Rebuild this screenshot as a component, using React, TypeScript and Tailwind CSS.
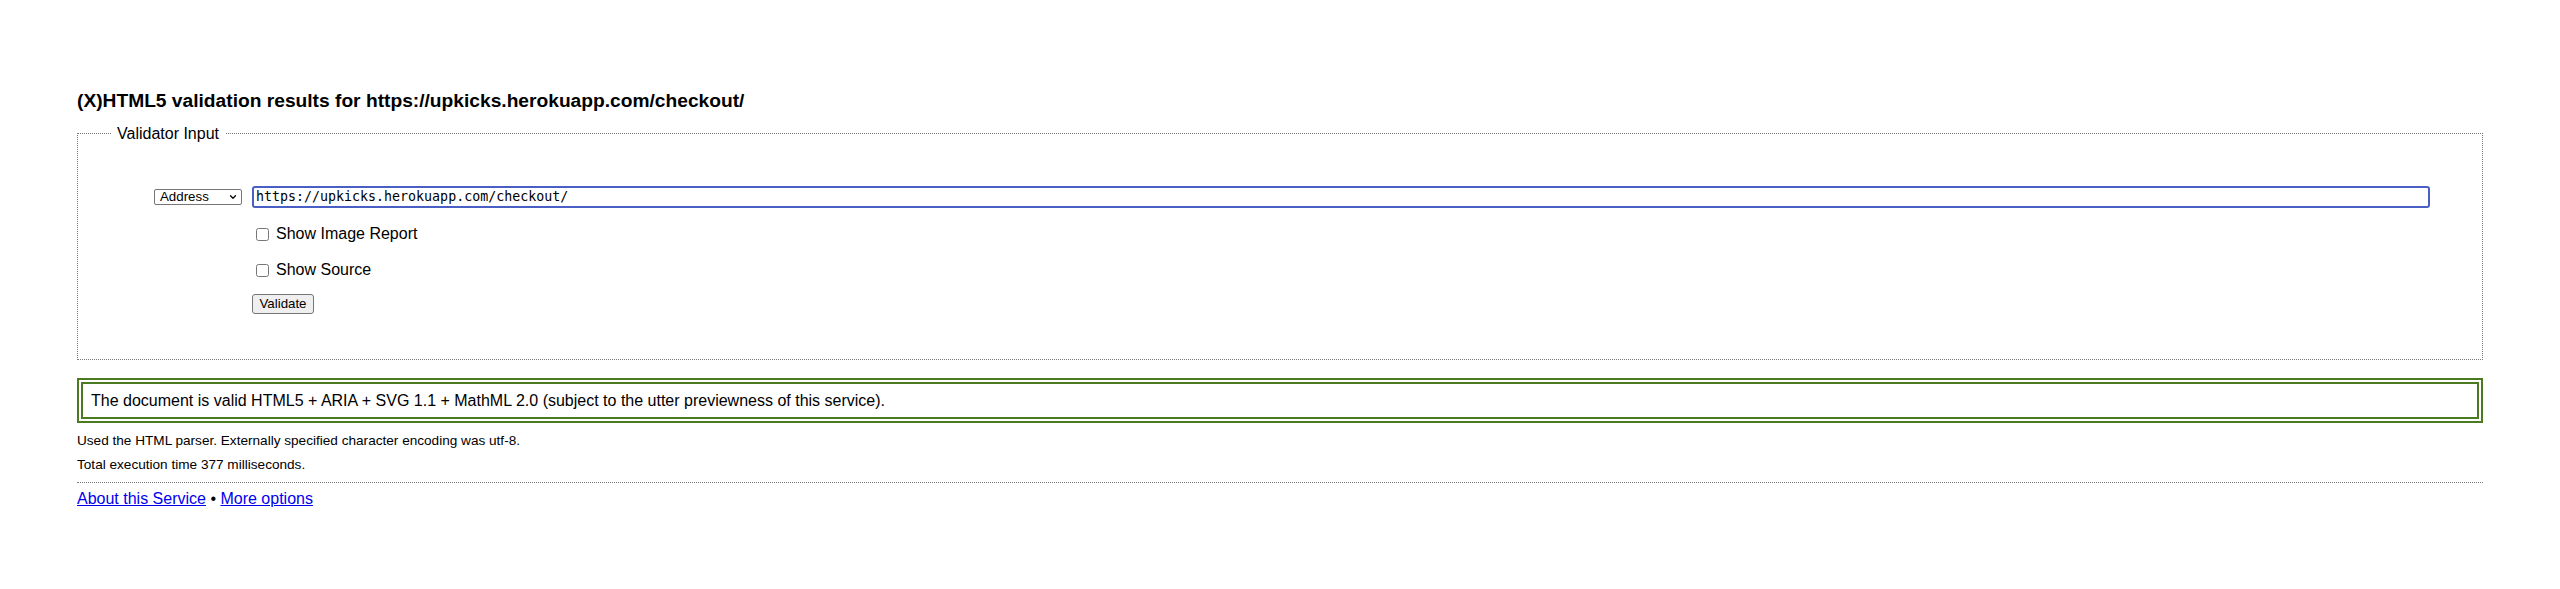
import React from "react";
import { ChevronDown } from "lucide-react";

export default function App() {
  return (
    <div className="min-h-[589px] bg-white px-[77px] pt-[90px] text-black font-['Liberation_Sans',Arial,sans-serif]">
      <h2 className="text-[19.2px] font-bold leading-[22px]">
        (X)HTML5 validation results for https://upkicks.herokuapp.com/checkout/
      </h2>

      {/* input form */}
      <fieldset className="mt-[9.5px] border border-dotted border-[#777] pb-[45.5px]">
        <legend className="ml-[33px] px-[6px] text-[16px]">Validator Input</legend>

        <div className="mt-[40px] flex h-[22px] items-center pl-[76px] pr-[52px]">
          <div className="w-[98px] shrink-0">
            <div className="flex h-[16px] w-[88px] items-center justify-between rounded-[2px] border border-[#767676] pl-[5px] pr-[3px] text-[13.3px] leading-[14px]">
              <span>Address</span>
              <ChevronDown size={10} strokeWidth={3} />
            </div>
          </div>
          <div className="flex h-[22px] flex-1 items-center rounded-[3px] border-2 border-[#4a5fc4] px-[2px] font-['DejaVu_Sans_Mono',monospace] text-[13.3px] leading-[16px]">
            https://upkicks.herokuapp.com/checkout/
          </div>
        </div>

        <div className="pl-[174px]">
          <label className="mt-[17px] flex h-[19px] items-center text-[16px]">
            <input type="checkbox" className="ml-[4px] mr-[7px] h-[13px] w-[13px]" />
            Show Image Report
          </label>
          <label className="mt-[17px] flex h-[19px] items-center text-[16px]">
            <input type="checkbox" className="ml-[4px] mr-[7px] h-[13px] w-[13px]" />
            Show Source
          </label>
          <button className="mt-[14px] flex h-[20px] w-[62px] items-center justify-center rounded-[3px] border border-[#767676] bg-[#efefef] text-[13.3px]">
            Validate
          </button>
        </div>
      </fieldset>

      <p className="mt-[17.5px] border-[6px] border-double border-[#4b7a21] px-[8px] py-[7px] text-[16px] leading-[19px]">
        The document is valid HTML5 + ARIA + SVG 1.1 + MathML 2.0 (subject to the utter previewness of this service).
      </p>

      <div className="mt-[6px] text-[13.6px] leading-[24px]">
        <p>Used the HTML parser. Externally specified character encoding was utf-8.</p>
        <p>Total execution time 377 milliseconds.</p>
      </div>

      <hr className="mt-[5.5px] border-t border-dotted border-[#777]" />

      <p className="mt-[3.5px] text-[16px]">
        <a href="#" className="text-[#0000ee] underline">About this Service</a>
        {" • "}
        <a href="#" className="text-[#0000ee] underline">More options</a>
      </p>
    </div>
  );
}
